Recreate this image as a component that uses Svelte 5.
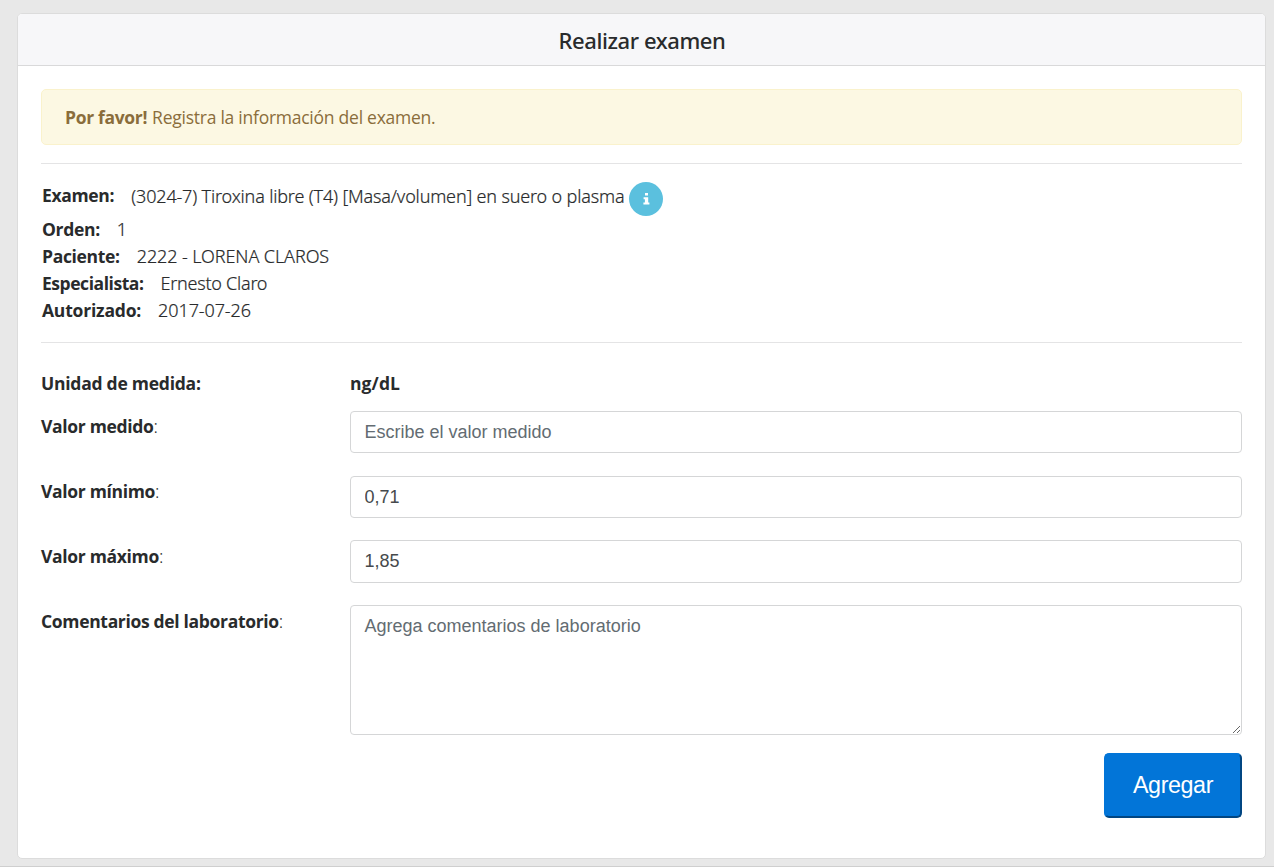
<script>
  const details = [
    { label: 'Orden:', value: '1', key: 'order' },
    { label: 'Paciente:', value: '2222 - LORENA CLAROS', key: 'patient' },
    { label: 'Especialista:', value: 'Ernesto Claro', key: 'specialist' },
    { label: 'Autorizado:', value: '2017-07-26', key: 'date' }
  ];
  let measured = $state('');
  let min = $state('0,71');
  let max = $state('1,85');
  let comments = $state('');
</script>

<main>
  <section class="card">
    <header><h1>Realizar examen</h1></header>
    <div class="body">
      <div class="alert"><strong>Por favor!</strong><span>Registra la información del examen.</span></div>
      <hr />
      <div class="details">
        <div class="row exam">
          <b>Examen:</b>
          <span class="value">(3024-7) Tiroxina libre (T4) [Masa/volumen] en suero o plasma</span>
          <button class="info" type="button" aria-label="Información">
            <svg width="7" height="12" viewBox="0 0 7 12" fill="#fff">
              <path d="M2 0h3v2.6H2zM.6 4.2h4.6v5.2h1.2v2H.4v-2h1.5V6.2H.6z" />
            </svg>
          </button>
        </div>
        {#each details as d}
          <div class="row {d.key}"><b>{d.label}</b><span class="value">{d.value}</span></div>
        {/each}
      </div>
      <hr />
      <form>
        <div class="field unit"><div class="label"><b>Unidad de medida:</b></div><b class="unit-value">ng/dL</b></div>
        <div class="field">
          <label for="measured"><b>Valor medido</b>:</label>
          <input id="measured" placeholder="Escribe el valor medido" bind:value={measured} />
        </div>
        <div class="field">
          <label for="min"><b>Valor mínimo</b>:</label>
          <input id="min" bind:value={min} />
        </div>
        <div class="field">
          <label for="max"><b>Valor máximo</b>:</label>
          <input id="max" bind:value={max} />
        </div>
        <div class="field comments">
          <label for="comments"><b>Comentarios del laboratorio</b>:</label>
          <textarea id="comments" placeholder="Agrega comentarios de laboratorio" bind:value={comments}></textarea>
        </div>
        <div class="actions"><button class="submit" type="button">Agregar</button></div>
      </form>
    </div>
  </section>
</main>

<style>
  :global(body) {
    background: #e8e8e8;
  }
  * {
    box-sizing: border-box;
  }
  main {
    height: 867px;
    padding: 13px 8px 8px 17px;
    border-bottom: 1px solid #cfcfcf;
    font: 300 18px/27px 'Noto Sans', 'Open Sans', sans-serif;
    color: #292b2c;
    overflow: hidden;
  }
  .card {
    height: 846px;
    background: #fff;
    border: 1px solid #dcdcdc;
    border-radius: 5px;
    overflow: hidden;
  }
  header {
    height: 52px;
    background: #f7f7f9;
    border-bottom: 1px solid #d9d9da;
    display: flex;
    align-items: center;
    justify-content: center;
  }
  h1 {
    margin: 1px 0 0 1px;
    font: 500 22px/27px 'Noto Sans', sans-serif;
    letter-spacing: -0.42px;
  }
  .body {
    padding: 23px;
  }
  b,
  strong {
    font: 700 17.5px/27px 'Open Sans', sans-serif;
    letter-spacing: -0.33px;
  }
  .alert {
    height: 56px;
    padding: 1px 23px 0;
    display: flex;
    align-items: center;
    gap: 5px;
    background: #fcf8e3;
    border: 1px solid #faf2cc;
    border-radius: 5px;
    color: #8a6d3b;
  }
  .alert span {
    font: 400 17.5px/27px 'Open Sans', sans-serif;
    letter-spacing: -0.25px;
  }
  hr {
    height: 1px;
    margin: 18px 0 0;
    border: 0;
    background: #e4e4e5;
  }
  .details {
    padding: 18px 0 0 1px;
  }
  .row {
    display: flex;
    height: 27px;
    align-items: center;
  }
  .value {
    margin-left: 17px;
    white-space: nowrap;
    letter-spacing: -0.1px;
    -webkit-text-stroke: 0.2px currentColor;
  }
  .exam {
    height: 34px;
    align-items: flex-start;
  }
  .exam .value {
    margin-top: 1px;
    letter-spacing: -0.165px;
  }
  .specialist b {
    letter-spacing: -0.45px;
  }
  .specialist .value {
    letter-spacing: -0.25px;
  }
  .date b {
    letter-spacing: -0.2px;
  }
  .info {
    width: 34px;
    height: 34px;
    margin-left: 5px;
    padding: 0;
    border: 0;
    border-radius: 50%;
    background: #5bc0de;
    display: flex;
    align-items: center;
    justify-content: center;
  }
  .details + hr {
    margin-top: 18px;
  }
  form {
    padding-top: 27px;
  }
  .field {
    display: grid;
    grid-template-columns: 309px 1fr;
    height: 42px;
    margin-bottom: 23px;
  }
  .field.unit {
    height: 27px;
    margin-bottom: 14px;
  }
  .unit b {
    letter-spacing: -0.25px;
  }
  .unit .unit-value {
    letter-spacing: 0.1px;
  }
  label {
    padding-top: 2px;
  }
  .field:nth-child(3) {
    margin-bottom: 22px;
  }
  .field:nth-child(4) {
    height: 43px;
    margin-bottom: 22px;
  }
  .field:nth-child(n + 4) label {
    padding-top: 3px;
  }
  input,
  textarea {
    display: block;
    width: 100%;
    height: 100%;
    margin: 0;
    padding: 7px 13.5px;
    border: 1px solid #d5d6d7;
    border-radius: 4px;
    background: #fff;
    font: 400 18px/27px 'Liberation Sans', Arial, sans-serif;
    color: #464a4c;
    outline: none;
  }
  textarea {
    resize: vertical;
  }
  ::placeholder {
    color: #636c72;
    opacity: 1;
  }
  .field.comments {
    height: 130px;
    margin-bottom: 18px;
  }
  .actions {
    display: flex;
    justify-content: flex-end;
  }
  .submit {
    width: 138px;
    height: 65px;
    padding: 0;
    border: 2px solid #0275d8;
    border-right-color: #014682;
    border-bottom-color: #014682;
    border-radius: 5px;
    background: #0275d8;
    color: #fff;
    font: 400 23.3px/27px 'Liberation Sans', Arial, sans-serif;
    letter-spacing: -0.4px;
  }
</style>
